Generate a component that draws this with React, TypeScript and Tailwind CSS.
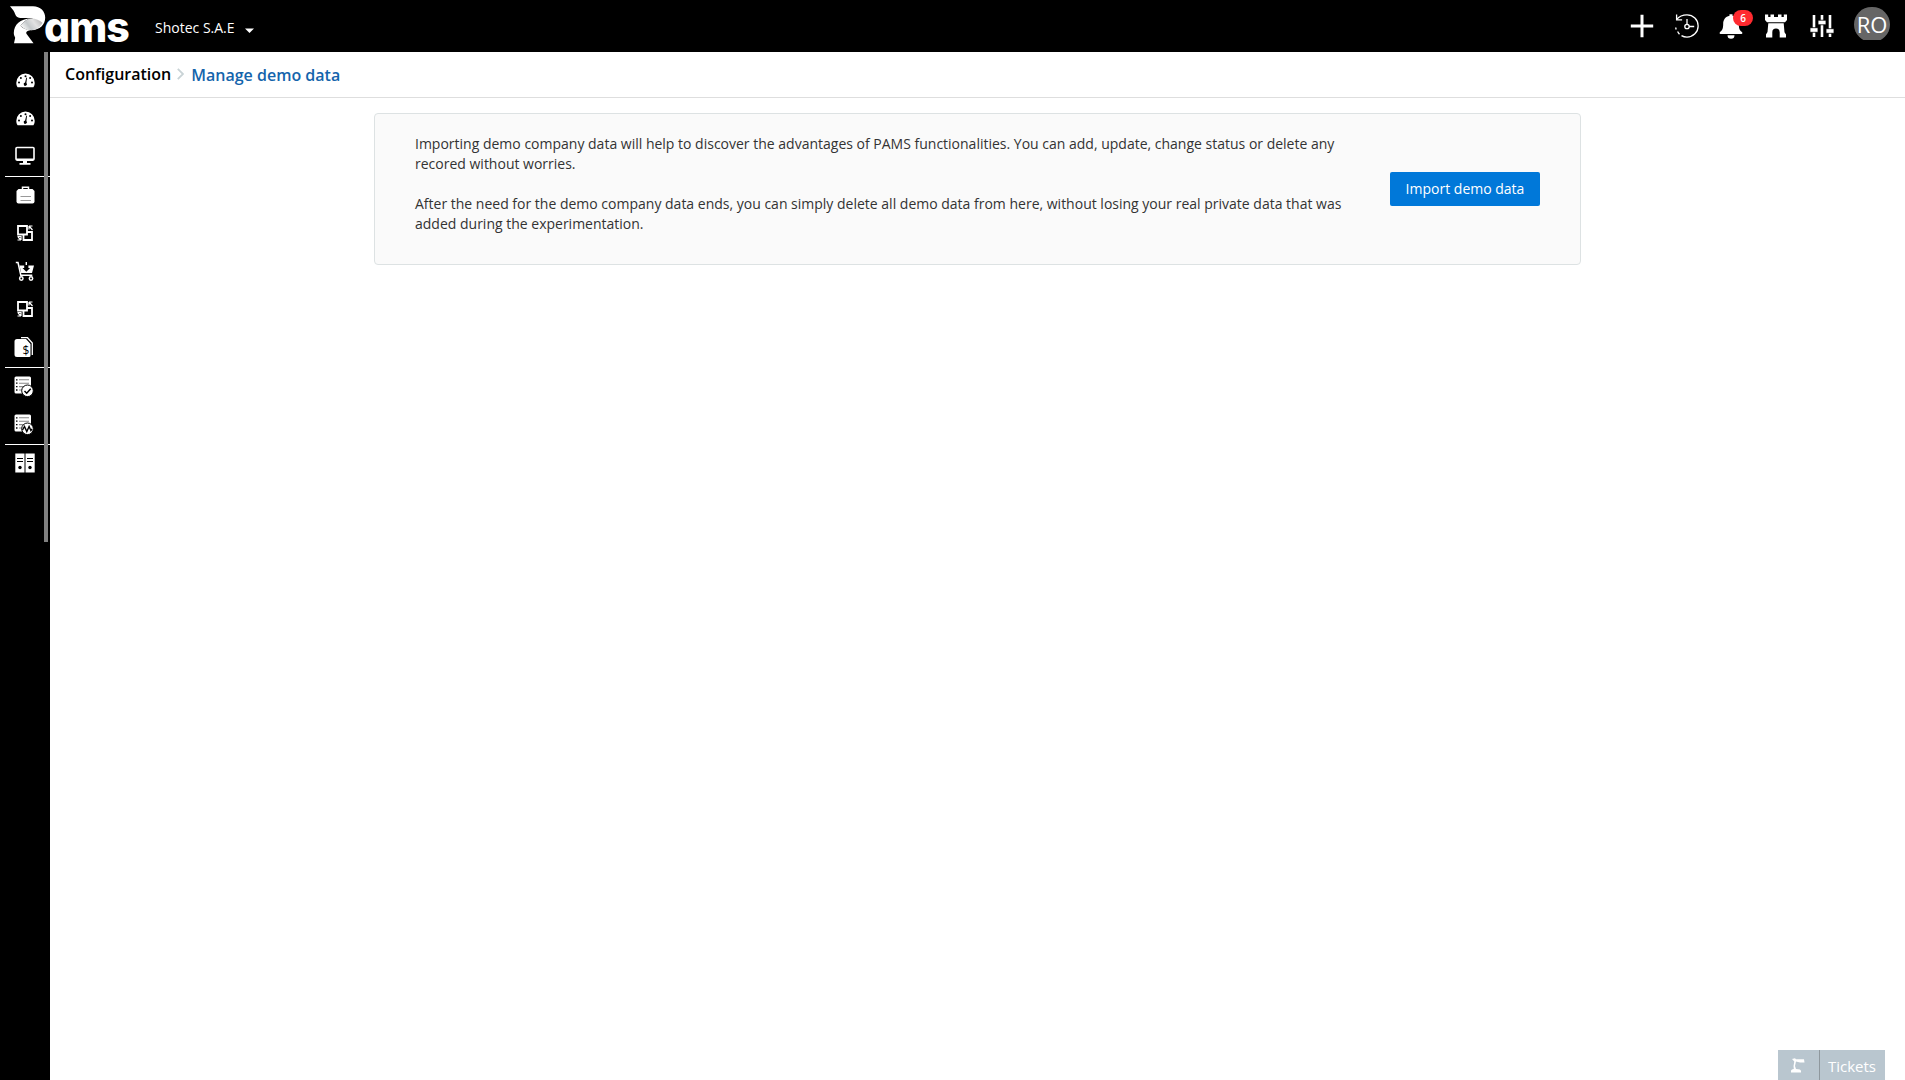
import React from 'react';

const GaugeIcon = () => (
  <svg width="19" height="15" viewBox="0 0 19 15">
    <path d="M1.6 14.3C.7 13 .3 11.400.3 9.700a9.200 9.200 0 0 1 18.400 0c0 1.700-.4 3.300-1.300 4.600z" fill="#fff" />
    <g fill="#000">
      <circle cx="9.500" cy="3.200" r="1" />
      <circle cx="4.900" cy="5.100" r="1" />
      <circle cx="14.100" cy="5.100" r="1" />
      <circle cx="3" cy="9.500" r="1" />
      <circle cx="16" cy="9.500" r="1" />
      <path d="M10.300 4.500l.7.200-.6 5.300a1.600 1.600 0 1 1-1.300-.4z" />
    </g>
  </svg>
);

const MonitorIcon = () => (
  <svg width="20" height="20" viewBox="0 0 20 20">
    <rect x="1" y="1.500" width="18" height="12.600" rx="1" fill="none" stroke="#fff" strokeWidth="1.600" />
    <path d="M1 12.500h18V14H1zM8 14.500h4v2.500h3.500v1.800h-11V17H8z" fill="#fff" />
  </svg>
);

const BriefcaseIcon = () => (
  <svg width="19" height="18" viewBox="0 0 19 18">
    <path d="M6.500 4V1.200h6V4" fill="none" stroke="#fff" strokeWidth="1.500" />
    <path d="M2.500 3h14L18.500 5v10.500a2 2 0 0 1-2 2h-14a2 2 0 0 1-2-2V5z" fill="#fff" />
    <path d="M4.500 10.500h10.500M4.500 14.500h10.500" stroke="#999" strokeWidth="1" />
  </svg>
);

const TransferIcon = () => (
  <svg width="18" height="18" viewBox="0 0 18 18" fill="none" stroke="#fff">
    <path d="M2 2h9v8.500H2zM11.500 8h4.500v8H7.500v-5" strokeWidth="1.800" />
    <path d="M13 2h3.500M13 2v3.500M13 2l3.500 4M1.500 12.500H5v3.500M5 16H1.500M2 13l3 3" strokeWidth="1.200" />
  </svg>
);

const CartIcon = () => (
  <svg width="20" height="20" viewBox="0 0 20 20">
    <path d="M.8 1.500H3l2.800 12.700h11.500" fill="none" stroke="#fff" strokeWidth="1.500" />
    <path d="M4.500 4.500h4.700V7H7.500l3.800 3.800L15.100 7h-1.700V4.500H19L17 12H6.200z" fill="#fff" />
    <path d="M11.300 1v3" stroke="#fff" strokeWidth="1.400" />
    <circle cx="6.300" cy="17.500" r="1.700" fill="none" stroke="#fff" strokeWidth="1.500" />
    <circle cx="16" cy="17.500" r="1.700" fill="none" stroke="#fff" strokeWidth="1.500" />
  </svg>
);

const InvoiceIcon = () => (
  <svg className="-ml-[3px]" width="20" height="20" viewBox="0 0 20 20">
    <path d="M7 .7h6.500L18.300 6v12" fill="none" stroke="#fff" strokeWidth="1.300" />
    <path d="M3 2h9l4.500 5v11.500a1.500 1.500 0 0 1-1.500 1.500H3A2.500 2.500 0 0 1 .5 17.500v-13A2.500 2.500 0 0 1 3 2z" fill="#fff" />
    <text x="8.500" y="17.500" fontSize="12" fill="#000" fontFamily="Open Sans">$</text>
  </svg>
);

const ListBase = () => (
  <>
    <rect x="0.500" y="0.500" width="16.500" height="17" rx="1.500" fill="#fff" />
    <path d="M2 3.800h1.500M2 7.200h1.500M2 10.600h1.500M2 14h1.500" stroke="#000" strokeWidth="1.300" />
    <path d="M5 3.800h10M5 7.200h10M5 10.600h6M5 14h4" stroke="#888" strokeWidth="1.100" />
    <circle cx="13.500" cy="14.800" r="5.800" fill="#fff" stroke="#000" strokeWidth="1" />
  </>
);

const ListCheckIcon = () => (
  <svg className="-ml-[2px]" width="20" height="21" viewBox="0 0 20 21">
    <ListBase />
    <path d="M10.500 15l2.200 2.200 4-4.400" fill="none" stroke="#000" strokeWidth="1.500" />
  </svg>
);

const ListPulseIcon = () => (
  <svg className="-ml-[2px]" width="20" height="21" viewBox="0 0 20 21">
    <ListBase />
    <path d="M8.500 16l2-3.500 2.300 5 2.300-5 1.800 4 1-1.500" fill="none" stroke="#000" strokeWidth="1.400" />
  </svg>
);

const BindersIcon = () => (
  <svg width="20" height="20" viewBox="0 0 20 20">
    <path d="M.3.500h9.200v19H.3zM10.500.500h9.200v19h-9.200z" fill="#fff" />
    <path d="M2 5.500h6M2 8.500h6M12 5.500h6M12 8.500h6" stroke="#000" strokeWidth="1" />
    <circle cx="5" cy="14.500" r="1.700" />
    <circle cx="15" cy="14.500" r="1.700" />
  </svg>
);

const menuGroups = [
  [GaugeIcon, GaugeIcon, MonitorIcon],
  [BriefcaseIcon, TransferIcon, CartIcon, TransferIcon, InvoiceIcon],
  [ListCheckIcon, ListPulseIcon],
  [BindersIcon],
];

const Logo = () => (
  <div className="flex h-[52px] w-[120px] items-start">
    <svg className="mt-1.5 shrink-0" width="36" height="38" viewBox="0 0 36 38">
      <defs>
        <linearGradient id="fold" x1="0" y1=".7" x2="1" y2=".3">
          <stop offset="0" stopColor="#fff" />
          <stop offset=".35" stopColor="#c4c8ca" />
          <stop offset=".65" stopColor="#e2e2e2" />
          <stop offset="1" stopColor="#b8b8b8" />
        </linearGradient>
      </defs>
      <path d="M0 .200h23c7.500 0 12.200 5 12.200 11.300 0 7-5 12.500-14.200 12.700L12 19l11-7H10.500C6 11.500 5.500 9 4.500 6.500 3.600 4 1.500 2.200 0 .200z" fill="#fff" />
      <path d="M21 12.300c5 .2 8.500 2 11.500 4.500-2.500 5-6.500 7.400-12 7.400-4 0-7.500-2-10-4.500 2.500-3.500 6-6.500 10.500-7.400z" fill="url(#fold)" />
      <path d="M21 12.300C10 13 4 18.500 3.800 27c0 1.800.7 3.200 1.400 4.700L4 37.200h19.500L17 28.500c-1.700-2.300-.3-4 3.500-4.300-4.500-.2-8-2-10-4.500 2.500-3.500 6-6.500 10.500-7.400z" fill="#fff" />
    </svg>
    <span className="-ml-[2px] mt-[4px] text-[41px] leading-[46px] font-extrabold tracking-[-0.9px] font-['Inter',sans-serif] [font-feature-settings:'cv11']">ams</span>
  </div>
);

export default function App() {
  return (
    <div className="flex h-[1080px] flex-col bg-white font-['Open_Sans',sans-serif] text-[14px] text-[#333]">
      {/* TOP BAR */}
      <header className="flex h-[52px] shrink-0 items-center bg-black text-white">
        <div className="ml-[10px]"><Logo /></div>
        <div className="ml-[25px] mt-[2px] flex items-center gap-[10px]">
          <span>Shotec S.A.E</span>
          <svg className="mt-[6px]" width="9" height="5" viewBox="0 0 9 5"><path d="M0 .5h9L4.500 5z" fill="#fff" /></svg>
        </div>

        <div className="ml-auto flex items-center pr-[15px]">
          <svg width="24" height="24" viewBox="0 0 24 24"><path d="M12 .800v22.400M.800 12h22.400" stroke="#fff" strokeWidth="3" /></svg>
          <svg className="ml-[21px]" width="24" height="24" viewBox="0 0 24 24" fill="none" stroke="#fff" strokeWidth="1.300">
            <path d="M1.500 5.500C4 2.500 8 .800 12 .800a11 11 0 0 1 0 22.300c-2 0-4-.6-5.500-1.500" />
            <path d="M4.500 20.200A11 11 0 0 1 2.600 17.500M1.200 15.500l-.6-2M1.600.500v5.300h5.500" />
            <circle cx="12" cy="12.500" r="2.200" />
            <path d="M12 5v5.300M14.200 12.500h5" />
          </svg>
          <div className="relative ml-[20px] h-[26px] w-[24px]">
            <svg width="24" height="26" viewBox="0 0 24 26">
              <path d="M10.500 1.200h3v1.500c4 .8 6.300 4 6.300 8 0 5.500 1.200 6.800 3.300 8.500.5.500.4 1.800-.6 1.800h-21c-1 0-1.100-1.300-.6-1.800 2-1.700 3.300-3 3.300-8.500 0-4 2.300-7.200 6.300-8z" fill="#fff" />
              <path d="M8.500 22.200h7a3.500 3.500 0 0 1-7 0z" fill="#fff" />
            </svg>
            <span className="absolute left-[14px] -top-[3px] flex h-[16px] w-[20px] items-center justify-center rounded-full bg-[#ff2a2f] text-[10px] font-semibold">6</span>
          </div>
          <svg className="ml-[22px]" width="22" height="24" viewBox="0 0 22 24">
            <path d="M0 .500h3.200v2.500h2.300V.500h3.500v2.500h4V.500h3.500v2.500h2.300V.500H22V6l-2 2.300H2L0 6zM3.300 9.300h15.400l.8 9L21 20.500v3h-6.300v-5.200a3.700 3.700 0 0 0-7.400 0v5.200H1v-3L2.500 18z" fill="#fff" />
          </svg>
          <svg className="ml-[23px]" width="24" height="24" viewBox="0 0 24 24">
            <path d="M4 1v22M12 1v22M20 1v22" stroke="#fff" strokeWidth="2.600" />
            <path d="M0 13.700h8v4.600H0zM8 6.200h8v4.600H8zM16 14.700h8v4.600h-8z" fill="#fff" stroke="#000" strokeWidth=".8" />
          </svg>
          <div className="ml-[20px] -mt-[5px] h-[33px] w-[36px] overflow-hidden">
            <div className="flex h-[35px] w-9 items-center justify-center rounded-full bg-[#666] text-[22px]">RO</div>
          </div>
        </div>
      </header>

      <div className="flex min-h-0 flex-1">
        {/* SIDEBAR */}
        <aside className="relative w-[50px] shrink-0 bg-black pt-[10px]">
          {menuGroups.map((group, i) => (
            <div key={i} className={i > 0 ? 'ml-[5px] border-t border-white' : 'ml-[5px]'}>
              {group.map((Icon, j) => (
                <div key={j} className="flex h-[38px] w-[40px] items-center justify-center pb-[2px]">
                  <Icon />
                </div>
              ))}
            </div>
          ))}
          <div className="absolute top-0 left-[44px] h-[490px] w-[4px] bg-[#808080]" />
        </aside>

        <main className="flex-1">
          {/* BREADCRUMB */}
          <div className="flex h-[46px] items-center border-b border-[#dedede] pl-[15px] text-[16px] font-semibold">
            <span className="-mt-[1px] text-black">Configuration</span>
            <svg className="mr-[7px] ml-[6px] -mt-[2px]" width="7" height="12" viewBox="0 0 7 12"><path d="M.800.800L6 6 .800 11.200" fill="none" stroke="#c9d3d6" strokeWidth="1.800" /></svg>
            <span className="text-[#1464ac]">Manage demo data</span>
          </div>

          {/* IMPORT CARD */}
          <section className="mt-[15px] ml-[324px] flex h-[152px] w-[1207px] items-start rounded-[4px] border border-[#dde2e3] bg-[#fafafa] pl-[40px]">
            <div className="mt-[20px] w-[940px] leading-[20px]">
              <p>Importing demo company data will help to discover the advantages of PAMS functionalities. You can add, update, change status or delete any<br />recored without worries.</p>
              <p className="mt-5">After the need for the demo company data ends, you can simply delete all demo data from here, without losing your real private data that was<br />added during the experimentation.</p>
            </div>
            <button className="mt-[58px] ml-[35px] h-[34px] w-[150px] rounded-[2px] bg-[#0078d9] pb-[2px] text-white">Import demo data</button>
          </section>
        </main>
      </div>

      {/* TICKETS WIDGET */}
      <div className="fixed right-[20px] bottom-0 flex h-[30px] w-[107px] bg-[#b9c6cf] text-white">
        <div className="flex w-[42px] items-center justify-center border-r border-[#8f989e] pr-[2px]">
          <svg width="14" height="15" viewBox="0 0 14 15">
            <path d="M1 1l3-.800 1 1h8l.5 3.300H9L5 3.500 4 8l1 3c3.500 0 5 .8 5 2v1.500H0V13c0-1 1-1.800 2.800-2L2.500 8l.8-4.500z" fill="#fff" />
          </svg>
        </div>
        <span className="flex flex-1 items-center justify-center pt-[3px] pr-[1px] text-[15px]">Tickets</span>
      </div>
    </div>
  );
}
